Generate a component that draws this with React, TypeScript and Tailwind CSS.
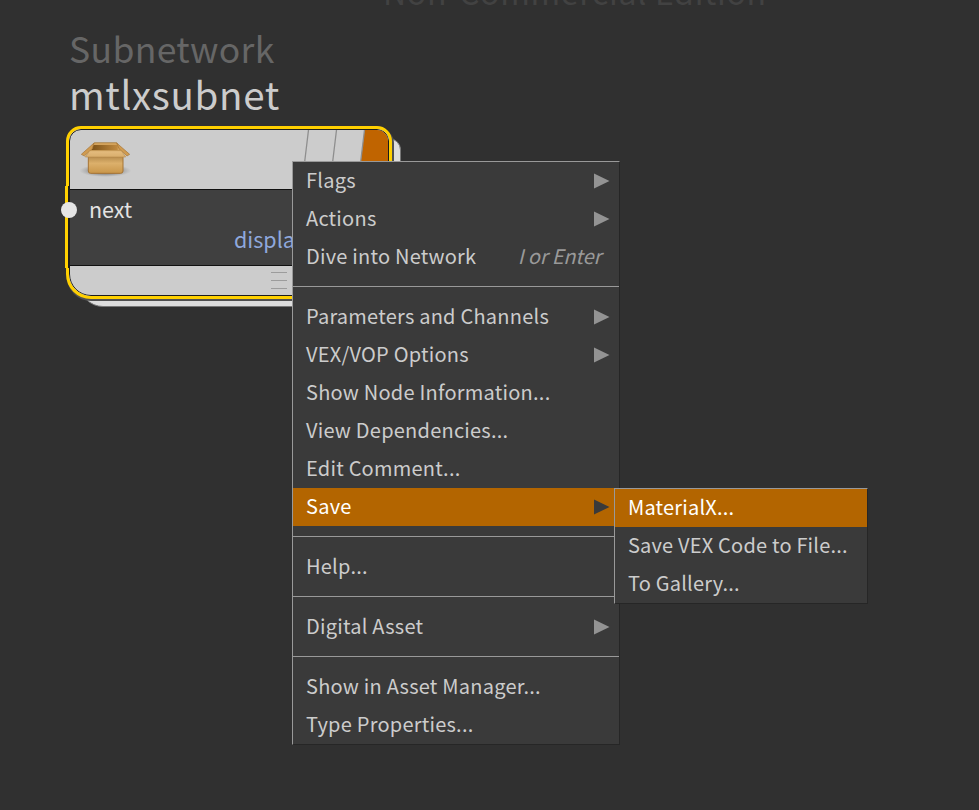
import React from "react";

type Item = { label: string; arrow?: boolean; hint?: string; active?: boolean };

const groups: Item[][] = [
  [
    { label: "Flags", arrow: true },
    { label: "Actions", arrow: true },
    { label: "Dive into Network", hint: "I or Enter" },
  ],
  [
    { label: "Parameters and Channels", arrow: true },
    { label: "VEX/VOP Options", arrow: true },
    { label: "Show Node Information..." },
    { label: "View Dependencies..." },
    { label: "Edit Comment..." },
    { label: "Save", arrow: true, active: true },
  ],
  [{ label: "Help..." }],
  [{ label: "Digital Asset", arrow: true }],
  [{ label: "Show in Asset Manager..." }, { label: "Type Properties..." }],
];

const saveItems: Item[] = [
  { label: "MaterialX...", active: true },
  { label: "Save VEX Code to File..." },
  { label: "To Gallery..." },
];

function Row({ item }: { item: Item }) {
  return (
    <div
      className={`flex h-[38px] items-center justify-between pb-[3px] pl-[13px] ${
        item.active ? "bg-[#b36500] text-white" : "text-[#cccccc]"
      }`}
    >
      <span className="whitespace-nowrap">{item.label}</span>
      {item.hint && <span className="pr-[18px] italic tracking-[-0.15px] text-[#999999]">{item.hint}</span>}
      {item.arrow && (
        <svg width="16" height="16" viewBox="0 0 16 16" className="mr-[9px] mt-[2px]">
          <path d="M0 0.5 L15.5 8 L0 15.5 Z" fill={item.active ? "#3a3a3a" : "#939393"} />
        </svg>
      )}
    </div>
  );
}

function BoxIcon() {
  return (
    <svg width="52" height="40" viewBox="75 60 156 120" className="ml-[10px] mt-[10px]">
      <defs>
        <linearGradient id="front" x1="0" y1="0" x2="0" y2="1">
          <stop offset="0" stopColor="#b88d4e" />
          <stop offset="0.4" stopColor="#dcb06b" />
          <stop offset="1" stopColor="#c9964a" />
        </linearGradient>
        <linearGradient id="flap" x1="0" y1="0" x2="0" y2="1">
          <stop offset="0" stopColor="#e5bd80" />
          <stop offset="1" stopColor="#d9ae6c" />
        </linearGradient>
        <linearGradient id="inside" x1="0" y1="0" x2="1" y2="0">
          <stop offset="0" stopColor="#7d5217" />
          <stop offset="1" stopColor="#c08a40" />
        </linearGradient>
        <radialGradient id="ground">
          <stop offset="0.5" stopColor="#777" stopOpacity="0.8" />
          <stop offset="1" stopColor="#999" stopOpacity="0" />
        </radialGradient>
      </defs>
      <ellipse cx="151" cy="152" rx="78" ry="19" fill="url(#ground)" />
      <path d="M118 68 H185 L201 94 H101 Z" fill="#d3a35c" stroke="#a27535" strokeWidth="2" />
      <path d="M115 75 H188 V90 H110 Z" fill="url(#inside)" />
      <path d="M100 110 H204 V153 Q204 160 197 160 H107 Q100 160 100 153 Z" fill="url(#front)" stroke="#a67434" strokeWidth="3" />
      <path d="M117 69 L79 103 L88 108 L112 86 Z" fill="#d09b50" stroke="#a47436" strokeWidth="2" />
      <path d="M185 69 L224 103 L216 108 L192 86 Z" fill="#d09b50" stroke="#a47436" strokeWidth="2" />
      <path d="M104 92 H199 L212 111 H91 Z" fill="url(#flap)" stroke="#bd904f" strokeWidth="2" />
    </svg>
  );
}

function Node() {
  return (
    <div className="absolute left-[65px] top-[126px] h-[182px] w-[337px]">
      <div className="absolute left-[14px] top-[12px] h-[169px] w-[322px] rounded-t-[12px] rounded-b-[24px] border border-[#777] bg-[#dddddd]" />
      <div className="absolute left-[2px] top-[3px] h-[172px] w-[327px] rounded-t-[14px] rounded-b-[24px] bg-[#505050]" />
      <div className="absolute left-px top-0 h-[173px] w-[326px] overflow-hidden rounded-t-[15px] rounded-b-[25px] border-[3px] border-[#ffd000] bg-[#cccccc]">
        <div className="flex h-full flex-col overflow-hidden rounded-t-[12px] rounded-b-[22px] border border-[#1c1c1c]">
          <div className="flex h-[59px] shrink-0 justify-between">
            <BoxIcon />
            <svg width="85" height="59" viewBox="0 0 85 59">
              <path d="M61.5 0 H85 V59 H54.5 Z" fill="#c06400" />
              <path d="M5.5 0 L-1.5 58 M33.5 0 L26.5 58 M61.5 0 L54.5 58" stroke="#8e8e8e" strokeWidth="1.3" />
            </svg>
          </div>
          <div className="flex h-[77px] shrink-0 flex-col border-y border-[#111111] bg-[#404040] pl-[19px] pt-[4px] text-[21.5px] leading-[30px]">
            <span className="text-[#e3e3e3]">next</span>
            <span className="pl-[145px] text-[#8fa8dc]">display</span>
          </div>
          <div className="flex grow flex-col gap-[7px] pl-[201px] pt-[6px]">
            <div className="h-px w-4 bg-[#9c9c9c]" />
            <div className="h-px w-4 bg-[#9c9c9c]" />
            <div className="h-px w-4 bg-[#9c9c9c]" />
          </div>
        </div>
      </div>
      <div className="absolute left-0 top-[60px] h-[82px] w-[3px] bg-[#ffd000]" />
      <div className="absolute left-[3px] top-[60px] h-[82px] w-px bg-[#1c1c1c]" />
      <div className="absolute -left-1 top-[76px] size-4 rounded-full bg-[#e5e5e5]" />
    </div>
  );
}

export default function App() {
  return (
    <div className="relative h-[810px] w-[979px] overflow-hidden bg-[#303030] font-['Noto_Sans_CJK_SC','Noto_Sans',sans-serif]">
      <div className="absolute left-[383px] top-[-33px] whitespace-nowrap text-[32px] leading-[48px] tracking-[0.7px] text-[#424242]">
        Non-Commercial Edition
      </div>
      <div className="absolute left-[69px] top-[25px] flex flex-col whitespace-nowrap">
        <span className="text-[35.5px] leading-[46px] tracking-[0.35px] text-[#666666]">Subnetwork</span>
        <span className="text-[38.5px] leading-[44px] tracking-[0.65px] text-[#cccccc]">mtlxsubnet</span>
      </div>
      <Node />
      <div className="absolute left-[292px] top-[161px] w-[328px] border border-[#262626] border-l-[#999999] border-t-[#999999] bg-[#3a3a3a] text-[20px] tracking-[0.23px]">
        {groups.map((g, i) => (
          <div key={i} className={i ? "mt-[10px] border-t border-[#999999] pt-[11px]" : ""}>
            {g.map((it) => (
              <Row key={it.label} item={it} />
            ))}
          </div>
        ))}
      </div>
      <div className="absolute left-[614px] top-[488px] w-[254px] border border-[#262626] border-l-[#999999] border-t-[#999999] bg-[#3a3a3a] text-[20px] tracking-[0.2px]">
        {saveItems.map((it) => (
          <Row key={it.label} item={it} />
        ))}
      </div>
    </div>
  );
}
